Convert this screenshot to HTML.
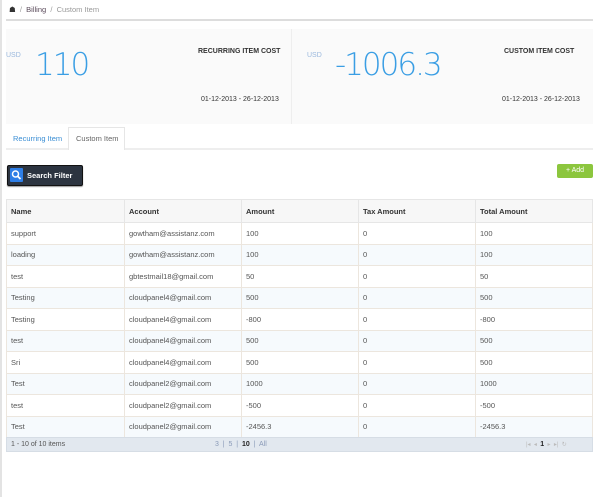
<!DOCTYPE html>
<html><head><style>
*{margin:0;padding:0;box-sizing:border-box}
body{width:600px;height:497px;background:#fff;font-family:"Liberation Sans",sans-serif;position:relative;overflow:hidden;color:#555}
.a{position:absolute}
.big{font-family:"DejaVu Sans ExtraLight","DejaVu Sans","Liberation Sans",sans-serif;font-weight:200;font-size:31px;color:#3a9ee4;line-height:40px;letter-spacing:-2px}
table{border-collapse:collapse;position:absolute;left:6px;top:199px;width:587px;font-size:7.5px}
td,th{border:1px solid #ece6de;height:21.5px;padding:0 4px;text-align:left;color:#555;font-weight:normal}
th{height:23px;font-weight:bold;color:#333;background:#f7f7f7;border-color:#e6e6e6}
tbody tr td{background:#fff}
tbody tr:nth-child(even) td{background:#f6fafd}
</style></head><body>
<div class="a" style="left:0;top:0;width:2px;height:497px;background:#e3e3e3"></div>
<div class="a" style="left:9px;top:5px;font-size:7.5px;color:#999;white-space:nowrap"><span style="color:#333">&#9751;</span>&nbsp; / &nbsp;<span style="color:#5a4a5a">Billing</span>&nbsp; / &nbsp;Custom Item</div>
<div class="a" style="left:6px;top:19px;width:587px;height:2px;background:#ddd"></div>
<div class="a" style="left:6px;top:29px;width:587px;height:95px;background:#fafafa"></div>
<div class="a" style="left:291px;top:29px;width:1px;height:95px;background:#eee"></div>
<div class="a" style="left:6px;top:52px;font-size:7px;color:#9ab8dd">USD</div>
<div class="a big" style="left:35px;top:45px">110</div>
<div class="a" style="left:198px;top:48px;font-size:7px;font-weight:bold;color:#333">RECURRING ITEM COST</div>
<div class="a" style="left:201px;top:96px;font-size:7px;color:#333">01-12-2013 - 26-12-2013</div>
<div class="a" style="left:307px;top:52px;font-size:7px;color:#9ab8dd">USD</div>
<div class="a big" style="left:335px;top:45px">-1006.3</div>
<div class="a" style="left:504px;top:48px;font-size:7px;font-weight:bold;color:#333">CUSTOM ITEM COST</div>
<div class="a" style="left:502px;top:96px;font-size:7px;color:#333">01-12-2013 - 26-12-2013</div>
<div class="a" style="left:6px;top:148px;width:587px;height:2px;background:#eee"></div>
<div class="a" style="left:13px;top:134px;font-size:7.5px;color:#3a8ed4">Recurring Item</div>
<div class="a" style="left:68px;top:127px;width:57px;height:23px;background:#fff;border:1px solid #e6e6e6;border-bottom:none"></div>
<div class="a" style="left:76px;top:134px;font-size:7.5px;color:#666">Custom Item</div>
<div class="a" style="left:7px;top:165px;width:76px;height:21px;background:#2c3440;border:1px solid #111;border-radius:2px;box-shadow:0 1px 1px #999"></div>
<div class="a" style="left:10px;top:168px;width:13px;height:14px;background:#2e7ee6;border-radius:1px"></div>
<svg class="a" style="left:10px;top:168px" width="13" height="14" viewBox="0 0 13 14"><circle cx="5.5" cy="6" r="3" fill="none" stroke="#fff" stroke-width="1.5"/><path d="M7.7 8.2L10.5 11" stroke="#fff" stroke-width="1.8"/></svg>
<div class="a" style="left:27px;top:171px;font-size:7.5px;font-weight:bold;color:#fff">Search Filter</div>
<div class="a" style="left:557px;top:164px;width:36px;height:14px;background:#8cc63e;border-radius:2px;color:#fff;font-size:7px;text-align:center;line-height:14px">+ Add</div>
<table>
<thead><tr><th style="width:118px">Name</th><th style="width:117px">Account</th><th style="width:117px">Amount</th><th style="width:117px">Tax Amount</th><th>Total Amount</th></tr></thead>
<tbody>
<tr><td>support</td><td>gowtham@assistanz.com</td><td>100</td><td>0</td><td>100</td></tr>
<tr><td>loading</td><td>gowtham@assistanz.com</td><td>100</td><td>0</td><td>100</td></tr>
<tr><td>test</td><td>gbtestmail18@gmail.com</td><td>50</td><td>0</td><td>50</td></tr>
<tr><td>Testing</td><td>cloudpanel4@gmail.com</td><td>500</td><td>0</td><td>500</td></tr>
<tr><td>Testing</td><td>cloudpanel4@gmail.com</td><td>-800</td><td>0</td><td>-800</td></tr>
<tr><td>test</td><td>cloudpanel4@gmail.com</td><td>500</td><td>0</td><td>500</td></tr>
<tr><td>Sri</td><td>cloudpanel4@gmail.com</td><td>500</td><td>0</td><td>500</td></tr>
<tr><td>Test</td><td>cloudpanel2@gmail.com</td><td>1000</td><td>0</td><td>1000</td></tr>
<tr><td>test</td><td>cloudpanel2@gmail.com</td><td>-500</td><td>0</td><td>-500</td></tr>
<tr><td>Test</td><td>cloudpanel2@gmail.com</td><td>-2456.3</td><td>0</td><td>-2456.3</td></tr>
</tbody></table>
<div class="a" style="left:6px;top:437px;width:587px;height:15px;background:#e2e8ef;border:1px solid #d6dde5"></div>
<div class="a" style="left:11px;top:441px;font-size:7px;color:#555">1 - 10 of 10 items</div>
<div class="a" style="left:215px;top:441px;font-size:7px;color:#8a9ab8;white-space:nowrap">3 &nbsp;|&nbsp; 5 &nbsp;|&nbsp; <b style="color:#222">10</b> &nbsp;|&nbsp; All</div>
<div class="a" style="left:526px;top:441px;font-size:6px;color:#bbb;white-space:nowrap">|◂ &nbsp;◂ &nbsp;<b style="color:#222;font-size:7px">1</b> &nbsp;▸ &nbsp;▸| &nbsp;↻</div>
</body></html>
